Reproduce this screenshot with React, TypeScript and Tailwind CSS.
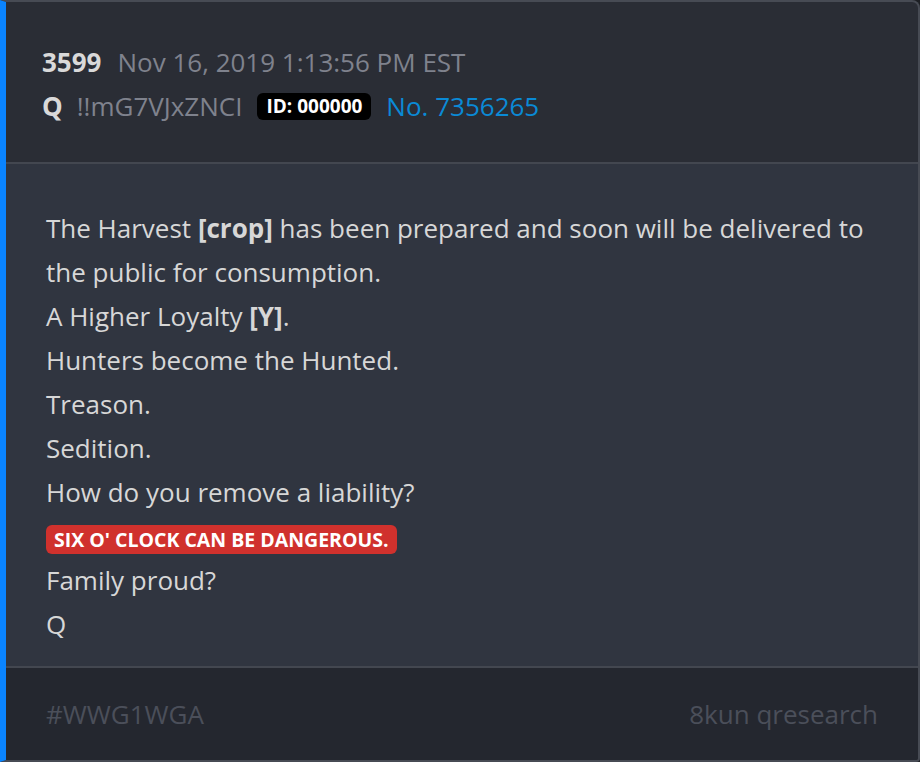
const lines: { text: React.ReactNode; kind?: "alert" }[] = [
  {
    text: (
      <>
        The Harvest <b className="font-bold">[crop]</b> has been prepared and soon will be delivered to the public for consumption.
      </>
    ),
  },
  {
    text: (
      <>
        A Higher Loyalty <b className="font-bold">[Y]</b>.
      </>
    ),
  },
  { text: "Hunters become the Hunted." },
  { text: "Treason." },
  { text: "Sedition." },
  { text: "How do you remove a liability?" },
  { text: "SIX O' CLOCK CAN BE DANGEROUS.", kind: "alert" },
  { text: "Family proud?" },
  { text: "Q" },
];

export default function App() {
  return (
    <div className="h-[762px] w-[920px] bg-[#1d1f24] font-['Open_Sans',sans-serif]">
      <div className="flex h-full flex-col overflow-hidden rounded-tr-[8px] rounded-br-[4px] border-2 border-l-[6px] border-[#474b54] border-l-[#0a84ff] bg-[#2a2d35]">
        <header className="border-b-2 border-[#434750] px-9 pt-[38px] pb-[34px] text-[26px] leading-[44px]">
          <div className="flex items-baseline gap-4">
            <span className="font-bold text-[#d9d9d9]">3599</span>
            <span className="text-[#7f828d]">Nov 16, 2019 1:13:56 PM EST</span>
          </div>
          <div className="flex items-center">
            <span className="font-bold text-[#d9d9d9]">Q</span>
            <span className="ml-[14px] text-[#7f828d]">!!mG7VJxZNCI</span>
            <span className="ml-[15px] rounded-[6px] bg-black px-[9px] text-[19px] leading-[27px] font-bold text-white">ID: 000000</span>
            <span className="ml-[15px] text-[#0a8ad6]">No. 7356265</span>
          </div>
        </header>

        <main className="flex-1 bg-[#303540] px-10 pt-[42px] pb-[19px] text-[26px] leading-[44px] text-[#d7d7d7]">
          {lines.map((line, i) =>
            line.kind === "alert" ? (
              <div key={i}>
                <span className="inline-block rounded-[6px] bg-[#d0312d] px-2 align-middle text-[19.5px] leading-[29px] font-bold text-white">
                  {line.text}
                </span>
              </div>
            ) : (
              <div key={i}>{line.text}</div>
            ),
          )}
        </main>

        <footer className="flex h-[94px] items-center justify-between border-t-2 border-[#434750] bg-[#24272f] px-10 text-[26px] text-[#4b4f5a]">
          <span>#WWG1WGA</span>
          <span>8kun qresearch</span>
        </footer>
      </div>
    </div>
  );
}
